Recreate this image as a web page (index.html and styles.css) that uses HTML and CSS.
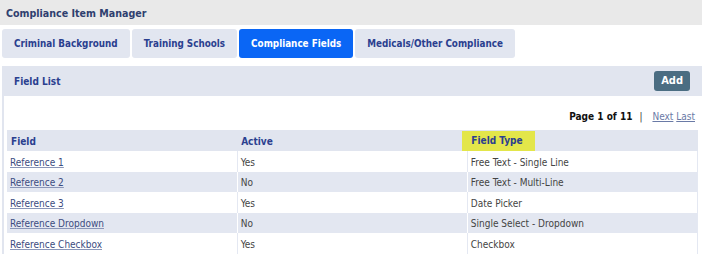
FILE: index.html
```html
<!DOCTYPE html>
<html>
<head>
<meta charset="utf-8">
<link rel="stylesheet" href="styles.css">
</head>
<body>
<div class="topbar">Compliance Item Manager</div>
<div class="tabs">
  <div class="tab">Criminal Background</div>
  <div class="tab">Training Schools</div>
  <div class="tab active">Compliance Fields</div>
  <div class="tab">Medicals/Other Compliance</div>
</div>
<div class="panel">
  <div class="panel-head">
    <span class="panel-title">Field List</span>
    <span class="btn-add">Add</span>
  </div>
  <div class="panel-body">
    <div class="pager"><b>Page 1 of 11</b><span class="sep">|</span><a href="#">Next</a> <a href="#">Last</a></div>
    <table class="grid">
      <thead>
        <tr><th>Field</th><th>Active</th><th><span class="hl">Field Type</span></th></tr>
      </thead>
      <tbody>
        <tr><td><a href="#">Reference 1</a></td><td>Yes</td><td>Free Text - Single Line</td></tr>
        <tr><td><a href="#">Reference 2</a></td><td>No</td><td>Free Text - Multi-Line</td></tr>
        <tr><td><a href="#">Reference 3</a></td><td>Yes</td><td>Date Picker</td></tr>
        <tr><td><a href="#">Reference Dropdown</a></td><td>No</td><td>Single Select - Dropdown</td></tr>
        <tr><td><a href="#">Reference Checkbox</a></td><td>Yes</td><td>Checkbox</td></tr>
      </tbody>
    </table>
  </div>
</div>
</body>
</html>
```
FILE: styles.css
```css
html, body {
  margin: 0;
  padding: 0;
  background: #fff;
  font-family: "DejaVu Sans Condensed", "DejaVu Sans", Verdana, sans-serif;
  font-size: 10px;
  overflow: hidden;
}
.topbar {
  height: 25px;
  line-height: 27px;
  background: #e9e9e9;
  padding-left: 6px;
  font-weight: bold;
  font-size: 10.6px;
  color: #2f3f6f;
}
.tabs {
  display: flex;
  gap: 2px;
  padding-left: 2px;
  margin-top: 4px;
}
.tab {
  height: 29px;
  line-height: 30px;
  padding: 0 12px 0 12px;
  background: #e2e6f0;
  border-radius: 3px;
  font-weight: bold;
  font-size: 9.8px;
  color: #2b3f8f;
}
.tab.active {
  background: #0a66f5;
  color: #fff;
}
.panel {
  margin: 8px 0 0 2px;
}
.panel-head {
  height: 30px;
  background: #e1e5ef;
  display: flex;
  align-items: center;
  justify-content: space-between;
  padding: 0 12px 0 12px;
}
.panel-title {
  font-weight: bold;
  font-size: 10px;
  color: #2b3f8f;
}
.btn-add {
  background: #4b6d82;
  color: #fff;
  font-weight: bold;
  font-size: 11px;
  padding: 0 7px;
  height: 20px;
  line-height: 20px;
  border-radius: 3px;
}
.panel-body {
  border-left: 2px solid #e1e5ef;
  padding: 0 4px 0 3px;
}
.pager {
  text-align: right;
  padding: 14px 3px 0 0;
  height: 20px;
  line-height: 14px;
  color: #111;
}
.pager .sep {
  margin: 0 10px 0 7px;
  font-weight: normal;
  color: #333;
}
.pager a {
  color: #6a7aa6;
}
.grid {
  width: 691px;
  border-collapse: collapse;
  table-layout: fixed;
}
.grid th {
  background: #e1e5ef;
  color: #2b3f8f;
  font-weight: bold;
  text-align: left;
  height: 20px;
  padding: 1px 4px 0;
  font-size: 10px;
}
.grid td {
  height: 18.5px;
  padding: 2px 3px 0;
  color: #444;
  border-left: 1px solid #e4e8f2;
}
.grid td:first-child {
  border-left: none;
}
.grid tbody tr:nth-child(even) td {
  background: #e3e7f1;
  border-left-color: #fff;
}
.grid td:last-child {
  border-right: 1px solid #e4e8f2;
}
.grid a {
  color: #3c4c80;
  text-decoration-color: #8a96b8;
}
.hl {
  display: inline-block;
  background: #e3e64a;
  margin-left: -9px;
  padding: 0 12px 0 9px;
  height: 20px;
  line-height: 20px;
  color: #2b3f8f;
}
```
